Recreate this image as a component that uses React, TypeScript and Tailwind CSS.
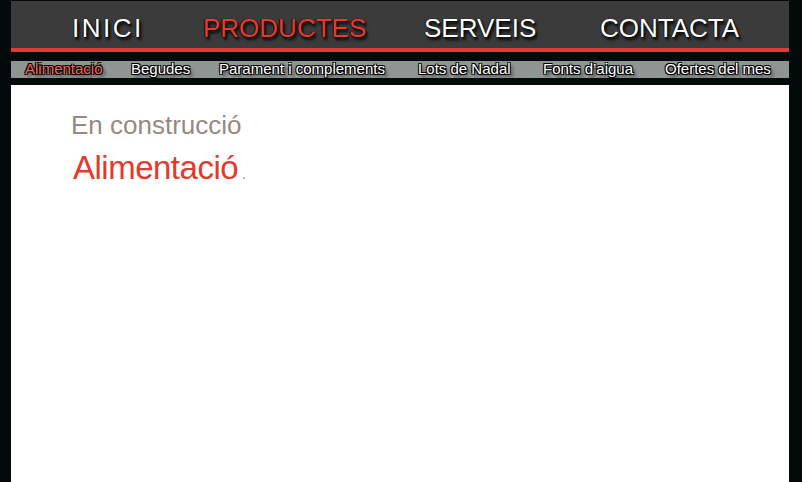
import React from "react";

const sh =
  "[text-shadow:0_0_1px_#000,1px_1px_0_#111,-1px_0_0_#222,2px_3px_3px_#000]";
const subSh =
  "[text-shadow:1px_1px_0_#000,-1px_-1px_0_#000,1px_-1px_0_#000,-1px_1px_0_#000,3px_3px_3px_rgba(0,0,0,0.55)]";

export default function App() {
  const main = [
    { t: "INICI", w: "w-[192px] pl-[61px] tracking-[2.5px]", red: false },
    { t: "PRODUCTES", w: "w-[221px]", red: true },
    { t: "SERVEIS", w: "w-[176px]", red: false },
    { t: "CONTACTA", w: "flex-1", red: false },
  ];
  const sub = [
    { t: "Alimentació", w: "w-[120px] pl-[14px]", red: true },
    { t: "Begudes", w: "w-[88px]", red: false },
    { t: "Parament i complements", w: "w-[199px]", red: false },
    { t: "Lots de Nadal", w: "w-[125px]", red: false },
    { t: "Fonts d’aigua", w: "w-[122px]", red: false },
    { t: "Ofertes del mes", w: "flex-1", red: false },
  ];
  return (
    <div className="w-[802px] h-[482px] bg-[#020b09] pl-[11px] pr-[13px] pt-[1px] flex flex-col font-['Liberation_Sans',Arial,sans-serif] overflow-hidden">
      <div className="h-[47px] bg-[#3b3b3b] flex items-start pt-[14px]">
        {main.map((m) => (
          <div
            key={m.t}
            className={`${m.w} shrink-0 text-[26px] leading-none ${sh} ${
              m.red ? "text-[#e63a2e]" : "text-white"
            }`}
          >
            {m.t}
          </div>
        ))}
      </div>
      <div className="h-[4px] bg-[#e63a2e]" />
      <div className="h-[9px]" />
      <div className="h-[17px] bg-[#8e9593] flex items-start">
        {sub.map((s) => (
          <div
            key={s.t}
            className={`${s.w} shrink-0 whitespace-nowrap text-[15px] leading-none ${subSh} ${
              s.red ? "text-[#f0665c]" : "text-white"
            }`}
          >
            {s.t}
          </div>
        ))}
      </div>
      <div className="h-[7px]" />
      <div className="flex-1 bg-white pl-[60px] pt-[27px]">
        <div className="text-[26px] leading-none text-[#978982]">En construcció</div>
        <div className="mt-[13px] pl-[2px] text-[33px] tracking-[-0.5px] leading-none text-[#e4392c]">
          Alimentació<span className="ml-[4px] text-[14px] text-[#978982]">.</span>
        </div>
      </div>
    </div>
  );
}
